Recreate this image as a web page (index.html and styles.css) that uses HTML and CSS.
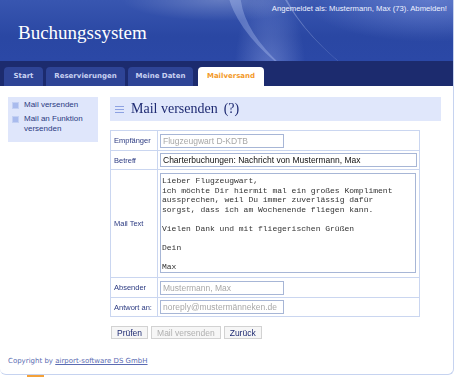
FILE: index.html
```html
<!DOCTYPE html>
<html lang="de">
<head>
  <meta charset="UTF-8">
  <title>Buchungssystem — Mailversand</title>
  <link rel="stylesheet" href="styles.css">
</head>
<body>

<div class="page">
  <div class="top">
    <div class="login">Angemeldet als: Mustermann, Max (73). <a href="#">Abmelden!</a></div>
    <h1>Buchungssystem</h1>
  </div>

  <div class="tabs">
    <a class="tab t-start" href="#">Start</a>
    <a class="tab t-res" href="#">Reservierungen</a>
    <a class="tab t-daten" href="#">Meine Daten</a>
    <a class="tab t-mail active" href="#">Mailversand</a>
  </div>

  <div class="content">
    <ul class="side">
      <li><span class="bullet"></span><a href="#">Mail versenden</a></li>
      <li><span class="bullet"></span><a href="#">Mail an Funktion versenden</a></li>
    </ul>

    <div class="main">
      <h2><span class="burger"><i></i><i></i><i></i></span>Mail versenden <span class="help">(?)</span></h2>

      <table class="form">
        <tr class="r20"><td class="lbl">Empfänger</td><td><input class="short" type="text" value="Flugzeugwart D-KDTB" disabled></td></tr>
        <tr class="r19"><td class="lbl">Betreff</td><td><input class="long" type="text" value="Charterbuchungen: Nachricht von Mustermann, Max"></td></tr>
        <tr><td class="lbl">Mail Text</td><td><textarea class="text">Lieber Flugzeugwart,
ich möchte Dir hiermit mal ein großes Kompliment
aussprechen, weil Du immer zuverlässig dafür
sorgst, dass ich am Wochenende fliegen kann.

Vielen Dank und mit fliegerischen Grüßen

Dein

Max
</textarea></td></tr>
        <tr class="r20"><td class="lbl">Absender</td><td><input class="short" type="text" value="Mustermann, Max" disabled></td></tr>
        <tr class="r19"><td class="lbl">Antwort an:</td><td><input class="short" type="text" value="noreply@mustermänneken.de" disabled></td></tr>
      </table>

      <div class="buttons">
        <button>Prüfen</button>
        <button disabled>Mail versenden</button>
        <button>Zurück</button>
      </div>
    </div>
  </div>

  <div class="foot">Copyright by <a href="#">airport-software DS GmbH</a></div>
</div>
<div class="corner"></div>

</body>
</html>
```

FILE: styles.css
```css
body { margin: 0; background: #fff; font-family: "Liberation Sans", Arial, sans-serif; }
.page { width: 453px; height: 374px; border-right: 1px solid #c6d3f0; border-bottom: 1px solid #c6d3f0; border-bottom-left-radius: 6px; border-bottom-right-radius: 6px; overflow: hidden; position: relative; }

.top {
  height: 61px; position: relative; overflow: hidden;
  background:
    radial-gradient(ellipse 140px 30px at 220px 0px, rgba(255,255,255,0.22), transparent 70%),
    radial-gradient(ellipse 60px 160px at 270px 80px, rgba(190,205,255,0.35), transparent 60%),
    radial-gradient(ellipse 180px 60px at 430px 0px, rgba(170,190,255,0.35), transparent 70%),
    linear-gradient(180deg, #3856b0 0%, #2a47a3 60%, #2b48a6 100%);
}
.top::before {
  content: ""; position: absolute; left: 215px; top: -40px; width: 260px; height: 140px;
  border-radius: 50%; border-left: 16px solid rgba(200,215,255,0.3); transform: rotate(28deg);
}
.top::after {
  content: ""; position: absolute; left: 250px; top: -70px; width: 300px; height: 160px;
  border-radius: 50%; border-left: 6px solid rgba(220,230,255,0.3); transform: rotate(35deg);
}
.login { position: absolute; right: 6px; top: 4px; color: #eef2ff; font-size: 7.7px; z-index: 1; }
.login a { color: #eef2ff; text-decoration: none; }
h1 { margin: 0; padding: 22px 0 0 18px; font-family: "Liberation Serif", Georgia, serif; font-weight: normal; font-size: 19px; color: #fff; position: relative; z-index: 1; }

.tabs { height: 25px; background: #1c2b6e; display: flex; align-items: flex-end; gap: 3px; padding-left: 4px; }
.tab { height: 19px; line-height: 19px; text-align: center; background: #2e4496; color: #c9d2f2; font-family: "DejaVu Sans", Verdana, sans-serif; font-weight: bold; font-size: 7px; text-decoration: none; border-radius: 4px 4px 0 0; }
.t-start { width: 39px; }
.t-res { width: 79px; }
.t-daten { width: 65px; }
.t-mail { width: 66px; }
.tab.active { background: #fff; color: #f39a2a; margin-left: 2px; }

.content { display: flex; align-items: flex-start; padding: 11px 0 0 8px; gap: 12px; }
.side { list-style: none; margin: 0; padding: 3px 4px 4px 4px; width: 82px; background: #dfe6fb; }
.side li { display: flex; gap: 5px; font-size: 8px; line-height: 10px; margin-bottom: 4px; }
.side a { color: #2c3b82; text-decoration: none; }
.bullet { flex: none; width: 5px; height: 5px; margin-top: 2px; background: #a9bbed; border: 1px solid #c3d0f3; }

.main { width: 331px; }
h2 { margin: 0; height: 24px; background: #e0e7fb; display: flex; align-items: center; padding-left: 5px; font-family: "Liberation Serif", Georgia, serif; font-weight: normal; font-size: 14px; color: #1e2a72; }
.help { margin-left: 6px; }
.burger { display: flex; flex-direction: column; gap: 2px; width: 9px; margin-right: 7px; }
.burger i { display: block; height: 1px; background: #8da2e2; }

.form { margin-top: 9px; border-collapse: collapse; width: 310px; }
.form td { border: 1px solid #cad6f0; padding: 0 2px; }
.form .lbl { width: 41px; padding-left: 3px; font-size: 7.5px; color: #2c3b82; }
.r20 td { height: 19px; }
.r19 td { height: 18px; }
input { font-family: "Liberation Sans", Arial, sans-serif; font-size: 8.5px; height: 14px; box-sizing: border-box; border: 1px solid #a7b6d6; padding: 0 2px; color: #111; background: #fff; margin: 0; display: block; }
input:disabled { color: #a8a8a8; background: #fff; }
.short { width: 124px; }
.long { width: 257px; }
.text { display: block; width: 256px; height: 100px; box-sizing: border-box; margin: 3px 0 4px; padding: 2px 2px 2px 1px; border: 1px solid #a7b6d6; font-family: "Liberation Mono", "Courier New", monospace; font-size: 8px; line-height: 9.6px; color: #333; resize: none; overflow-y: scroll; }
.text::-webkit-scrollbar { width: 10px; }
.text::-webkit-scrollbar-track { background: #f7f7f7; }
.text::-webkit-scrollbar-thumb { background: #f1f1f1; border: 1px solid #e6e6e6; }
.text::-webkit-scrollbar-button { display: block; height: 10px; background: #ececec; }

.buttons { display: flex; gap: 3px; margin-top: 9px; padding-left: 1px; }
button { font-family: "Liberation Sans", Arial, sans-serif; font-size: 8.5px; height: 13px; padding: 0 5px; background: #f6f6f6; border: 1px solid #d2d2d2; color: #1e2a72; }
button:disabled { color: #b0b0b0; }

.foot { position: absolute; left: 8px; top: 357px; font-size: 7px; color: #5a6bb2; font-family: "DejaVu Sans", Verdana, sans-serif; }
.foot a { color: #5a6bb2; }
.corner { position: absolute; left: 27px; top: 375px; width: 17px; height: 2px; background: #f3a13a; }
```
